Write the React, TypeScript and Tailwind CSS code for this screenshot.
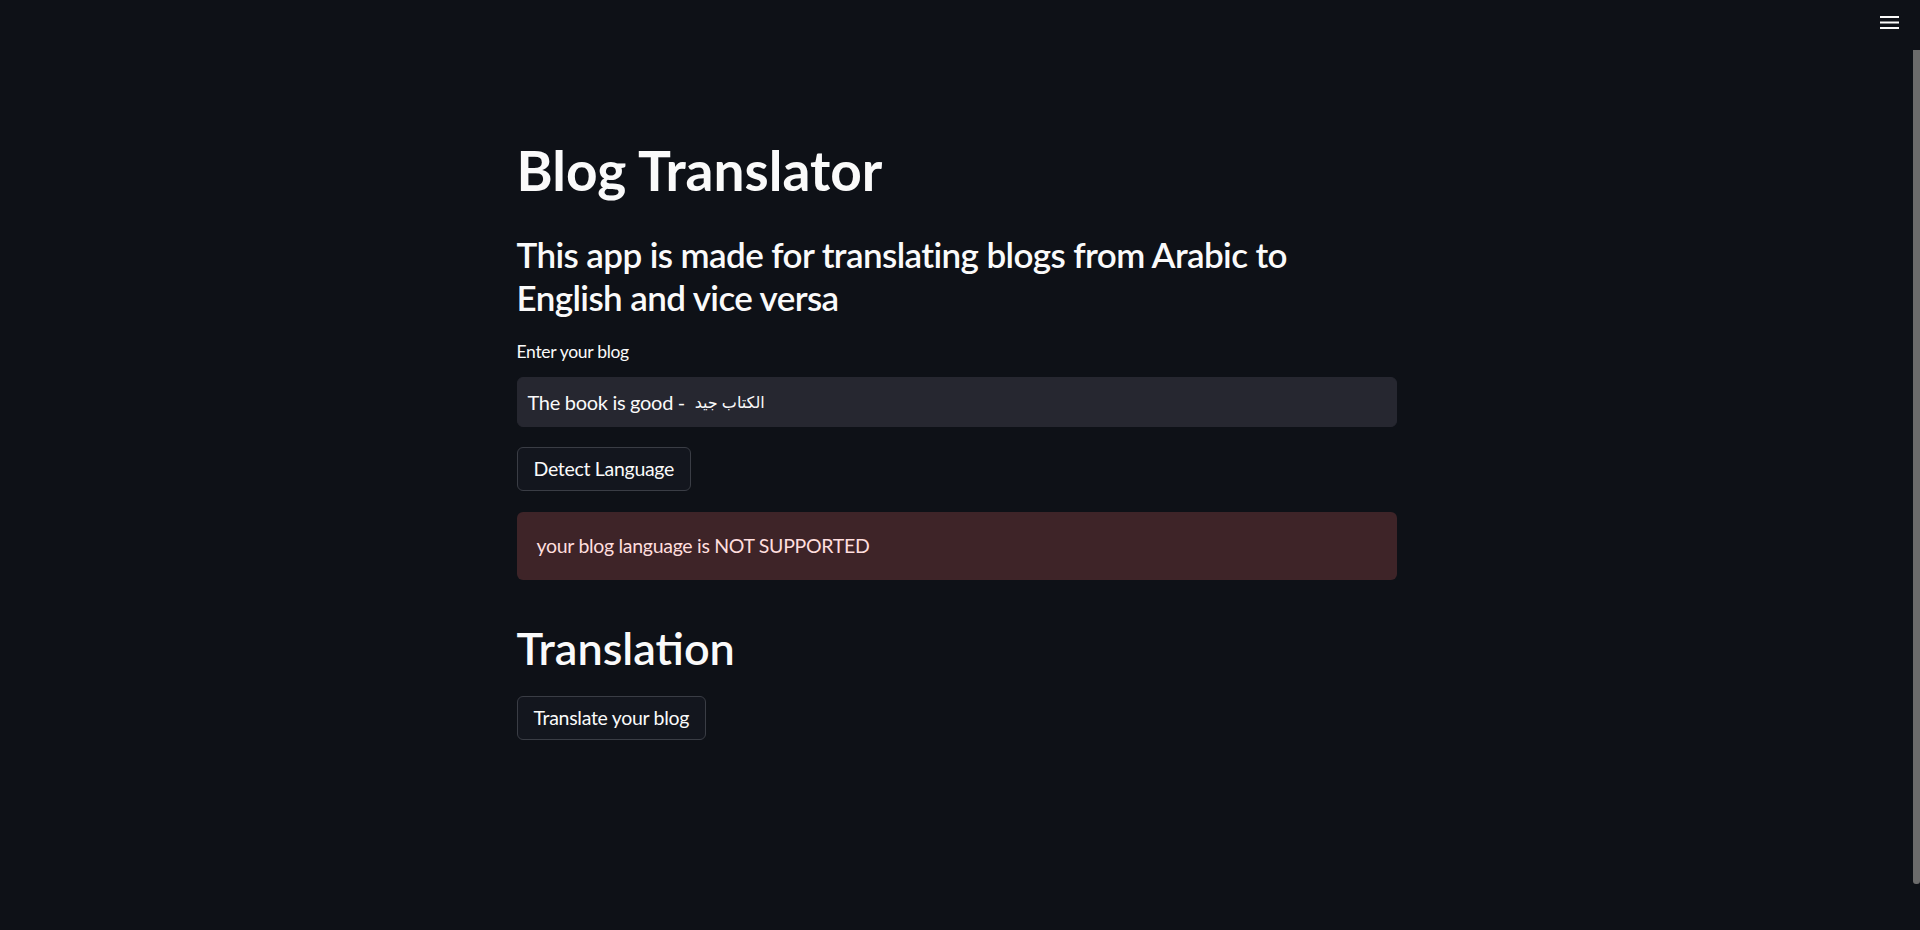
import { useState } from 'react'

const font = { fontFamily: '"Lato", "DejaVu Sans", sans-serif' }

function MenuIcon() {
  return <svg width="20" height="14" viewBox="0 0 20 14" className="block">
    <rect x="0" y="0" width="19" height="2" fill="#fafafa" />
    <rect x="0" y="5.5" width="19" height="2" fill="#fafafa" />
    <rect x="0" y="11" width="19" height="2" fill="#fafafa" />
  </svg>
}

function Button({ children }: { children: string }) {
  return <button
    type="button"
    className="h-[44px] self-start rounded-[6px] border border-[#3a3d45] bg-[#13161e] px-[16px] text-[19.5px] leading-[1.6] tracking-[-0.3px] text-[#fafafa] hover:border-[#ff4b4b] hover:text-[#ff4b4b]"
  >
    {children}
  </button>
}

export default function App() {
  const [focused, setFocused] = useState(false)

  return <div className="relative min-h-[930px] w-full bg-[#0e1117] text-[#fafafa]" style={font}>
    <header className="flex h-[50px] justify-end pr-[20px] pt-[16px]">
      <button type="button" aria-label="Menu" className="h-[14px]"><MenuIcon /></button>
    </header>

    <div className="pr-[7px]">
      <main className="mx-auto flex w-[880px] flex-col pt-[87px]">
        <h1 className="text-[55px] font-bold leading-[66px]">Blog Translator</h1>
        <h3 className="mt-[30px] text-[35px] font-semibold leading-[43px] tracking-[-0.6px]">
          This app is made for translating blogs from Arabic to<br />English and vice versa
        </h3>

        <label className="mt-[19px] text-[17.5px] leading-[28px] tracking-[-0.3px]">Enter your blog</label>
        <div
          role="textbox"
          tabIndex={0}
          onFocus={() => setFocused(true)}
          onBlur={() => setFocused(false)}
          className={`mt-[11px] flex h-[50px] w-full items-center whitespace-pre rounded-[6px] border bg-[#262730] px-[10px] text-[20px] tracking-[-0.3px] text-[#fafafa] outline-none ${focused ? 'border-[#ff4b4b]' : 'border-[#262730]'}`}
        >
          <span>The book is good -  </span><span className="text-[16px] tracking-normal">الكتاب جيد</span>
        </div>

        <div className="mt-[20px]"><Button>Detect Language</Button></div>

        <div className="mt-[21px] flex h-[68px] items-center rounded-[6px] bg-[#3e2428] px-[20px] text-[19.5px] tracking-[-0.3px] text-[#ffdede]">
          your blog language is NOT SUPPORTED
        </div>

        <h2 className="mt-[41px] text-[45px] font-semibold leading-[54px]">Translation</h2>

        <div className="mt-[21px]"><Button>Translate your blog</Button></div>
      </main>
    </div>

    <div className="absolute right-0 top-[50px] h-[834px] w-[7px] rounded-b-[3px] bg-[#6b6b6b]" />
  </div>
}
